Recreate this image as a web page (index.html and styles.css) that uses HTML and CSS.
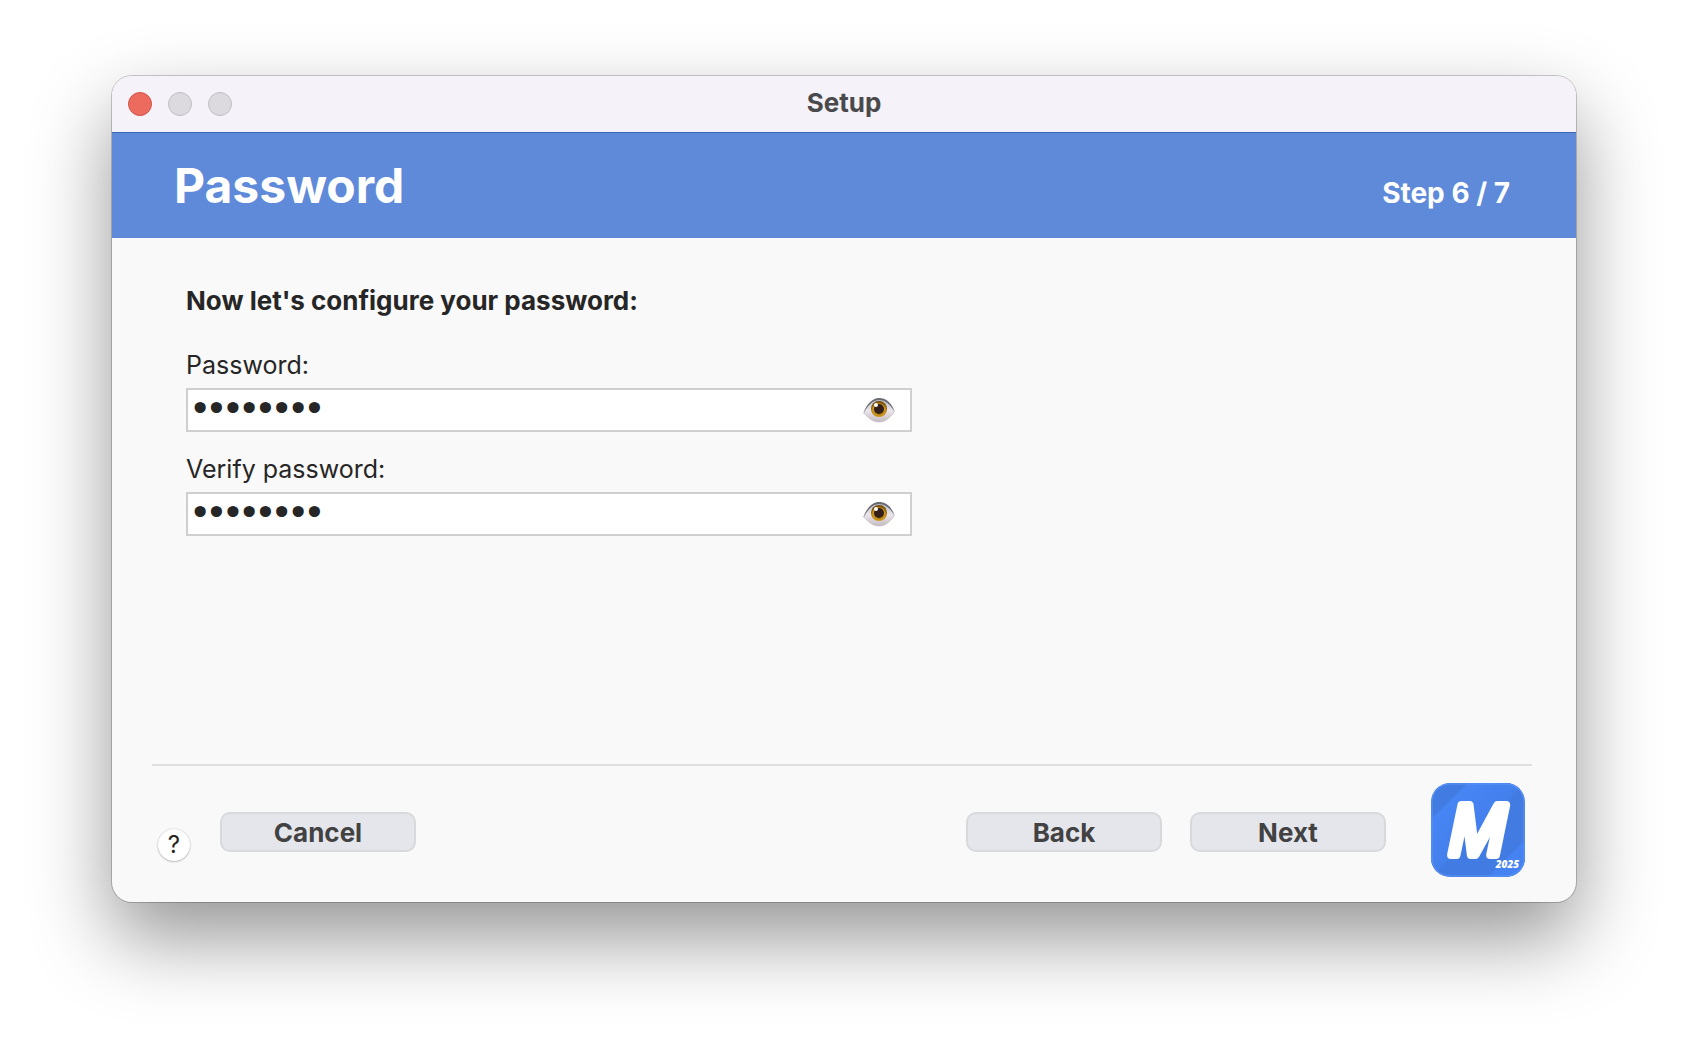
FILE: index.html
```html
<!DOCTYPE html>
<html lang="en">
<head>
    <meta charset="UTF-8">
    <meta name="viewport" content="width=device-width, initial-scale=1.0">
    <title>Setup</title>
    <link rel="stylesheet" href="styles.css">
</head>
<body>

    <!-- Shared eye drawing -->
    <svg class="defs" width="0" height="0" aria-hidden="true">
        <defs>
            <linearGradient id="eye-white" x1="0" y1="0" x2="0" y2="1">
                <stop offset="0" stop-color="#b9b7bd"/>
                <stop offset="0.5" stop-color="#ebe7ec"/>
                <stop offset="1" stop-color="#c4bbc2"/>
            </linearGradient>
            <radialGradient id="eye-iris" cx="0.5" cy="0.6" r="0.55">
                <stop offset="0" stop-color="#8a5a08"/>
                <stop offset="0.7" stop-color="#d19a1c"/>
                <stop offset="1" stop-color="#6b4508"/>
            </radialGradient>
            <symbol id="eye" viewBox="0 0 32 26">
                <path d="M1 16C5 6 10 2 16 2c7 0 12 5 15 13-4 6-9 10-15 10S5 21 1 16z" fill="url(#eye-white)" stroke="#b9b3ba" stroke-width="0.6"/>
                <path d="M0 17C4 6 10 1 16 1c7 0 12 4 16 14C27 7 22 3 16 3S5 8 0 17z" fill="#6a6c73"/>
                <circle cx="16" cy="12" r="8" fill="url(#eye-iris)"/>
                <circle cx="16" cy="12" r="5" fill="#33201c"/>
                <circle cx="13" cy="8" r="2" fill="#fff"/>
            </symbol>
        </defs>
    </svg>

    <main class="window">
        <!-- Title bar -->
        <div class="titlebar">
            <div class="lights">
                <button class="light light-close" aria-label="Close"></button>
                <button class="light" aria-label="Minimize"></button>
                <button class="light" aria-label="Zoom"></button>
            </div>
            <span class="window-title">Setup</span>
        </div>

        <!-- Header -->
        <header class="header">
            <h1>Password</h1>
            <span class="step">Step 6 / 7</span>
        </header>

        <!-- Form -->
        <form class="form">
            <h2>Now let's configure your password:</h2>
            <label for="password">Password:</label>
            <div class="field">
                <input type="password" id="password" value="password">
                <button type="button" class="eye-btn" aria-label="Show password" onclick="toggleField('password')">
                    <svg width="32" height="26"><use href="#eye"/></svg>
                </button>
            </div>
            <label for="verify">Verify password:</label>
            <div class="field">
                <input type="password" id="verify" value="password">
                <button type="button" class="eye-btn" aria-label="Show password" onclick="toggleField('verify')">
                    <svg width="32" height="26"><use href="#eye"/></svg>
                </button>
            </div>
        </form>

        <!-- Footer -->
        <footer class="footer">
            <button class="help" aria-label="Help">?</button>
            <button class="btn">Cancel</button>
            <div class="nav">
                <button class="btn">Back</button>
                <button class="btn">Next</button>
            </div>
            <svg class="logo" width="94" height="94" viewBox="0 0 94 94" role="img" aria-label="M 2025">
                <defs>
                    <clipPath id="logo-clip"><rect width="94" height="94" rx="19"/></clipPath>
                    <linearGradient id="logo-light" x1="0.2" y1="0.2" x2="0.55" y2="0.55">
                        <stop offset="0" stop-color="#4785f5"/>
                        <stop offset="1" stop-color="#437fea"/>
                    </linearGradient>
                </defs>
                <g clip-path="url(#logo-clip)">
                    <rect width="94" height="94" fill="#427be2"/>
                    <path d="M37 0h57L0 94V36z" fill="url(#logo-light)"/>
                    <path d="M94 57v37H57z" fill="#4583f2"/>
                </g>
                <rect x="1" y="1" width="92" height="92" rx="18" fill="none" stroke="#5c94f5" stroke-width="1"/>
                <text class="logo-letter" x="46" y="72" text-anchor="middle">M</text>
                <text class="logo-year" x="88" y="85" text-anchor="end">2025</text>
            </svg>
        </footer>
    </main>

    <script>
        // Show or hide the text of a password field
        function toggleField(id) {
            const field = document.getElementById(id);
            field.type = field.type === 'password' ? 'text' : 'password';
        }
    </script>

</body>
</html>
```
FILE: styles.css
```css
* {
    margin: 0;
    padding: 0;
    box-sizing: border-box;
}

body {
    font-family: Inter, 'Liberation Sans', sans-serif;
    font-size: 25px;
    background-color: #fff;
    color: #262626;
    min-height: 100vh;
    padding: 76px 112px;
}

button, input {
    font: inherit;
    color: inherit;
}

button {
    cursor: pointer;
}

.defs {
    position: absolute;
}

.window {
    background-color: #f9f9f9;
    border-radius: 20px;
    overflow: hidden;
    box-shadow: 0 0 0 1px rgba(0, 0, 0, 0.2), 0 36px 80px rgba(0, 0, 0, 0.42);
}

/* Title Bar */
.titlebar {
    display: grid;
    grid-template-columns: 1fr auto 1fr;
    align-items: center;
    height: 56px;
    padding: 0 16px;
    background-color: #f5f3f9;
}

.lights {
    display: flex;
    gap: 16px;
}

.light {
    width: 24px;
    height: 24px;
    border: 1px solid #bfbdc2;
    border-radius: 50%;
    background-color: #dcdade;
}

.light-close {
    background-color: #ed6a5f;
    border-color: #d05349;
}

.window-title {
    font-size: 26px;
    line-height: 32px;
    font-weight: 700;
    color: #4a494b;
    padding-bottom: 2px;
}

/* Header */
.header {
    display: flex;
    justify-content: space-between;
    align-items: baseline;
    height: 106px;
    padding: 23px 66px 0 62px;
    background-color: #5e8ad9;
    border-top: 1px solid #3566b5;
    color: #fff;
}

.header h1 {
    font-size: 48px;
    line-height: 60px;
    font-weight: 700;
}

.step {
    font-size: 28px;
    font-weight: 700;
}

/* Form */
.form {
    min-height: 526px;
    padding: 46px 74px;
}

.form h2 {
    font-size: 26px;
    line-height: 34px;
    font-weight: 700;
    margin-bottom: 28px;
}

.form label {
    display: block;
    line-height: 38px;
    margin-bottom: 4px;
}

.field {
    display: flex;
    max-width: 726px;
    height: 44px;
    margin-bottom: 18px;
    border: 2px solid #cfcfcf;
    background-color: #fff;
}

.field input {
    flex: 1;
    min-width: 0;
    padding: 0 4px 8px;
    border: none;
    outline: none;
    background: none;
    font-size: 29px;
    line-height: 32px;
}

.field input[type="password"] {
    -webkit-text-stroke: 2px #262626;
}

.eye-btn {
    display: flex;
    align-items: center;
    padding: 0 15px;
    border: none;
    background: none;
}

/* Footer */
.footer {
    display: flex;
    align-items: flex-start;
    margin: 0 44px 0 40px;
    padding: 17px 7px 25px 5px;
    border-top: 2px solid #dfdfdf;
}

.btn {
    width: 196px;
    height: 40px;
    margin-top: 29px;
    padding-top: 2px;
    border: 2px solid #d8d9da;
    border-radius: 10px;
    background-color: #e5e6ec;
    color: #424242;
    font-size: 26px;
    font-weight: 700;
    line-height: 34px;
}

.help {
    width: 32px;
    height: 32px;
    margin: 46px 30px 0 1px;
    border: none;
    border-radius: 50%;
    background-color: #fff;
    box-shadow: 0 0 2px rgba(0, 0, 0, 0.2), 0 1px 2px rgba(0, 0, 0, 0.2);
    font-size: 24px;
    line-height: 32px;
}

.nav {
    display: flex;
    gap: 28px;
    margin-left: auto;
    margin-right: 45px;
}

.logo {
    overflow: visible;
}

.logo-letter {
    font-family: 'Open Sans', sans-serif;
    font-size: 69px;
    font-weight: 400;
    font-style: italic;
    fill: #fff;
    stroke: #fff;
    stroke-width: 8px;
    stroke-linejoin: round;
}

.logo-year {
    font-family: 'Open Sans', sans-serif;
    font-size: 10px;
    font-weight: 800;
    font-style: italic;
    fill: #fff;
}
```
